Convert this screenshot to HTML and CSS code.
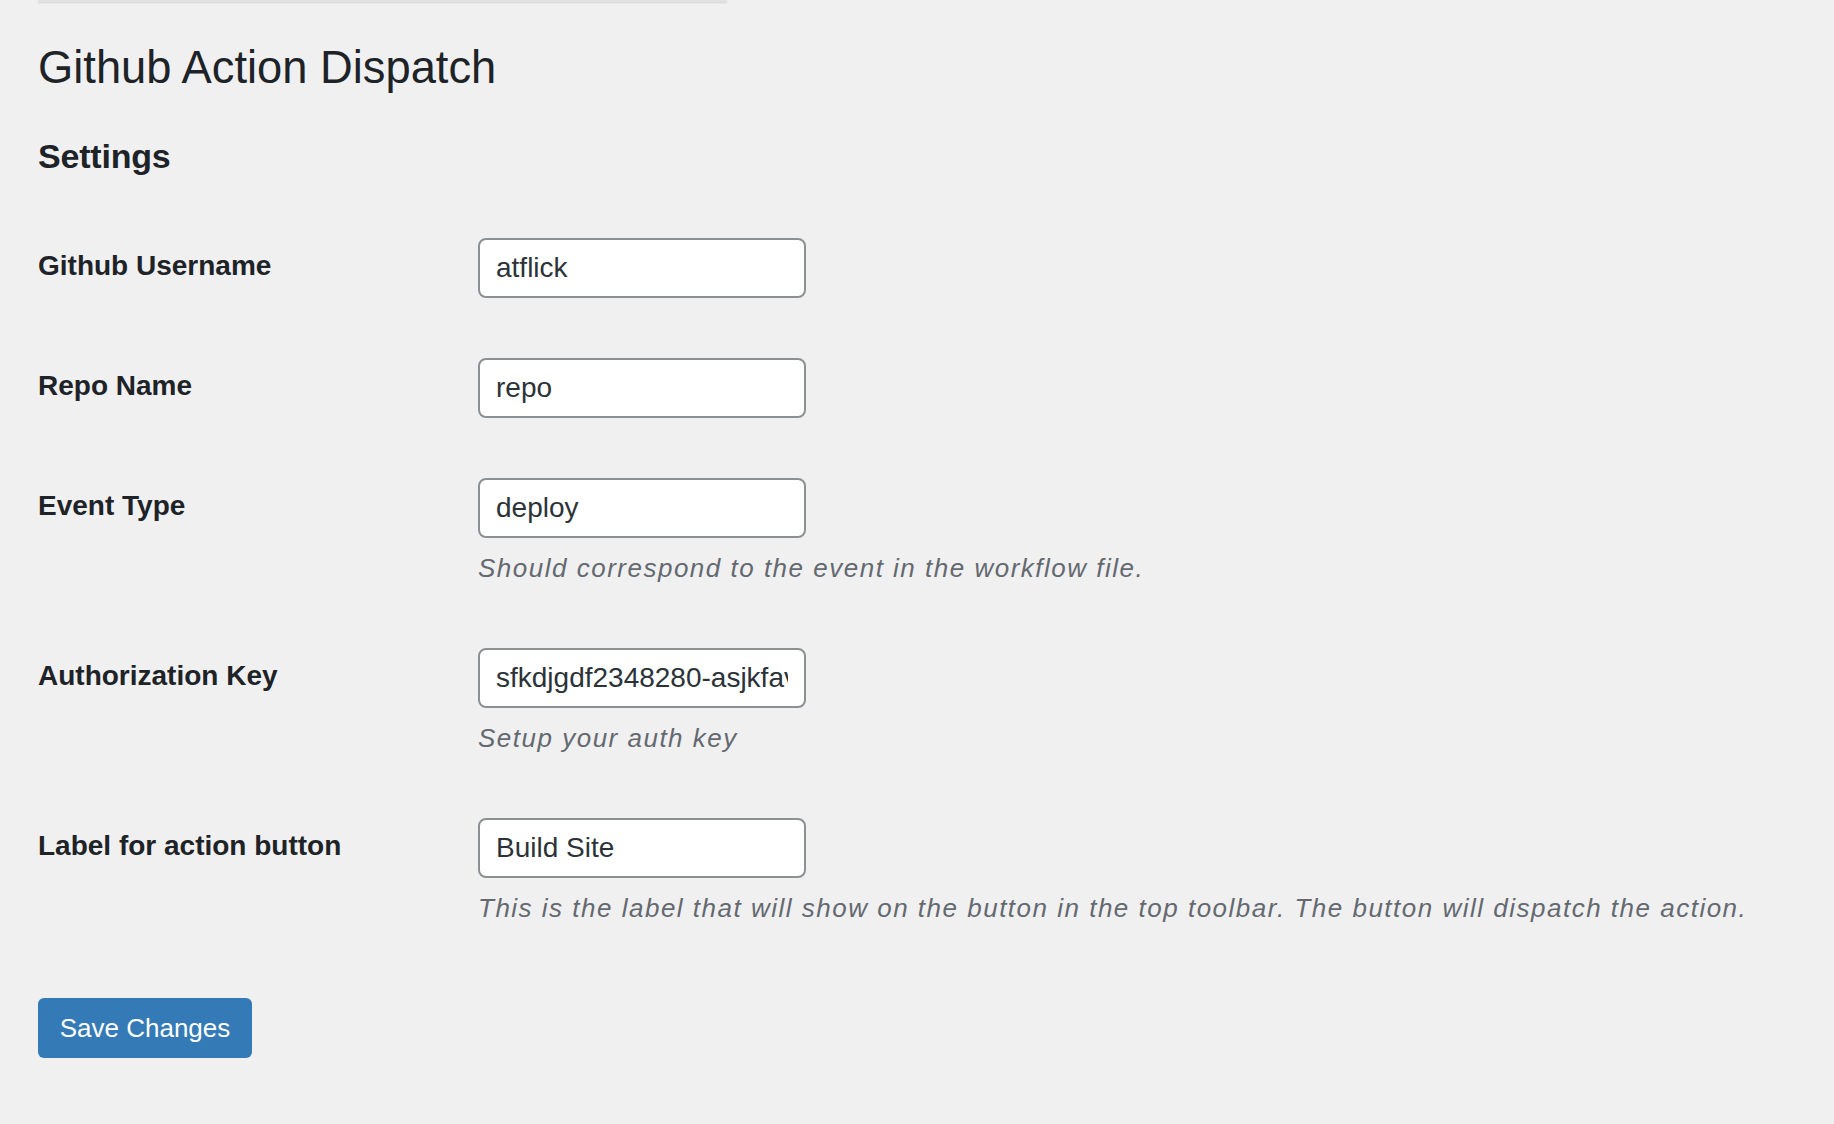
FILE: index.html
```html
<!DOCTYPE html>
<html lang="en">
<head>
<meta charset="utf-8">
<title>Github Action Dispatch</title>
<link rel="stylesheet" href="styles.css">
</head>
<body>
<div class="wrap">
  <div class="top-edge"></div>
  <h1 class="page-title">Github Action Dispatch</h1>
  <h2 class="section-title">Settings</h2>
  <form class="settings-form">
    <div class="form-table">
      <div class="form-row">
        <label class="field-label" for="gh-user">Github Username</label>
        <div class="field-cell">
          <input class="text-input" id="gh-user" type="text" value="atflick">
        </div>
      </div>
      <div class="form-row">
        <label class="field-label" for="gh-repo">Repo Name</label>
        <div class="field-cell">
          <input class="text-input" id="gh-repo" type="text" value="repo">
        </div>
      </div>
      <div class="form-row">
        <label class="field-label" for="gh-event">Event Type</label>
        <div class="field-cell">
          <input class="text-input" id="gh-event" type="text" value="deploy">
          <p class="description">Should correspond to the event in the workflow file.</p>
        </div>
      </div>
      <div class="form-row">
        <label class="field-label" for="gh-key">Authorization Key</label>
        <div class="field-cell">
          <input class="text-input" id="gh-key" type="text" value="sfkdjgdf2348280-asjkfavwe9823">
          <p class="description">Setup your auth key</p>
        </div>
      </div>
      <div class="form-row">
        <label class="field-label" for="gh-label">Label for action button</label>
        <div class="field-cell">
          <input class="text-input" id="gh-label" type="text" value="Build Site">
          <p class="description">This is the label that will show on the button in the top toolbar. The button will dispatch the action.</p>
        </div>
      </div>
    </div>
    <p class="submit">
      <button class="button-primary" type="button">Save Changes</button>
    </p>
  </form>
</div>
</body>
</html>
```
FILE: styles.css
```css
html, body {
  margin: 0;
  padding: 0;
  background: #f0f0f1;
}

body {
  font-family: "Liberation Sans", Arial, sans-serif;
  color: #1d2327;
  min-height: 1124px;
}

.wrap {
  padding-left: 38px;
}

.top-edge {
  width: 689px;
  height: 2px;
  background: #e2e2e3;
  box-shadow: 0 1px 2px rgba(0, 0, 0, 0.12);
}

.page-title {
  margin: 37px 0 0;
  font-size: 45.3px;
  font-weight: 400;
  line-height: 58px;
  color: #1d2327;
}

.section-title {
  margin: 37px 0 0;
  font-size: 34px;
  font-weight: 700;
  line-height: 44px;
  color: #1d2327;
  letter-spacing: -0.2px;
}

.settings-form {
  margin: 30px 0 0;
}

.form-table {
  display: flex;
  flex-direction: column;
}

.form-row {
  display: flex;
  align-items: flex-start;
}

.field-label {
  width: 440px;
  flex: 0 0 440px;
  padding-top: 40px;
  font-size: 28px;
  font-weight: 700;
  line-height: 36px;
  color: #1d2327;
}

.field-cell {
  padding: 30px 0;
}

.text-input {
  box-sizing: border-box;
  display: block;
  width: 328px;
  height: 60px;
  margin: 0;
  padding: 0 16px;
  border: 2px solid #8c8f94;
  border-radius: 8px;
  background: #fff;
  font-family: "Liberation Sans", Arial, sans-serif;
  font-size: 28px;
  color: #2c3338;
  outline: none;
}

.description {
  margin: 10px 0 0;
  font-size: 26px;
  line-height: 40px;
  font-style: italic;
  color: #646970;
  letter-spacing: 1.5px;
  white-space: nowrap;
}

.submit {
  margin: 40px 0 0;
  padding: 0;
}

.button-primary {
  box-sizing: border-box;
  width: 214px;
  height: 60px;
  padding: 0;
  border: 0;
  border-radius: 6px;
  background: #337ab6;
  color: #fff;
  font-family: "Liberation Sans", Arial, sans-serif;
  font-size: 26px;
  line-height: 60px;
  cursor: pointer;
}
```
